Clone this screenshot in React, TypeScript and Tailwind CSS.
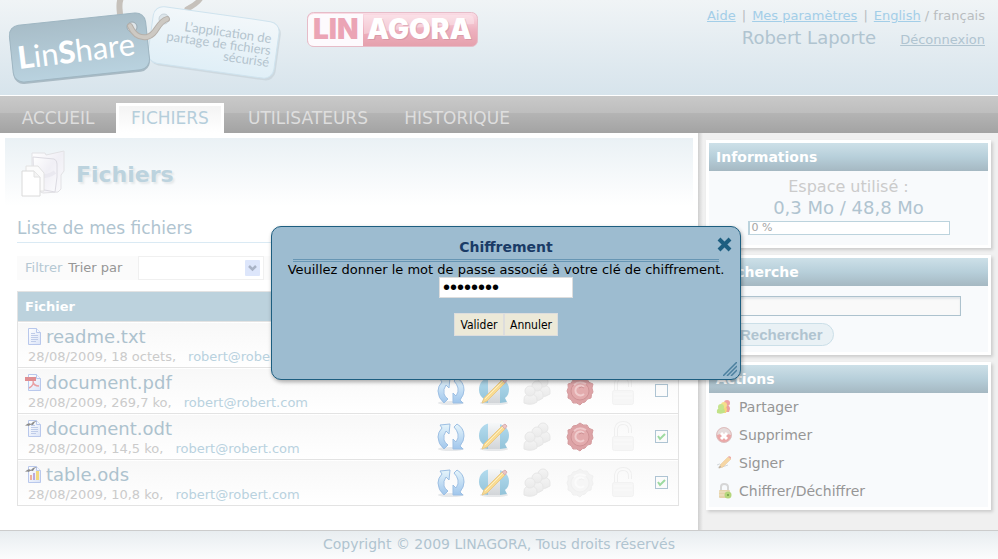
import type { ReactNode } from 'react';

function Gradients() {
  return (
    <svg width="0" height="0" className="absolute" aria-hidden="true">
      <defs>
        <linearGradient id="arrowBlue" x1="0" y1="0" x2="0" y2="1">
          <stop offset="0" stopColor="#e6f5fb" />
          <stop offset="1" stopColor="#a0c6ec" />
        </linearGradient>
        <linearGradient id="globeBlue" x1="0" y1="0" x2="0" y2="1">
          <stop offset="0" stopColor="#b4dcef" />
          <stop offset="1" stopColor="#93c3d9" />
        </linearGradient>
        <linearGradient id="paperGrey" x1="0" y1="0" x2="0" y2="1">
          <stop offset="0" stopColor="#f6f8f9" />
          <stop offset="1" stopColor="#d2d5d8" />
        </linearGradient>
        <linearGradient id="paleGrey" x1="0" y1="0" x2="0" y2="1">
          <stop offset="0" stopColor="#f4f4f4" />
          <stop offset="1" stopColor="#eaeaea" />
        </linearGradient>
        <linearGradient id="docBlue" x1="0" y1="0" x2="1" y2="1">
          <stop offset="0" stopColor="#ffffff" />
          <stop offset="1" stopColor="#dbe4f7" />
        </linearGradient>
        <linearGradient id="tagDark" x1="0" y1="0" x2="0" y2="1">
          <stop offset="0" stopColor="#a8bdc8" />
          <stop offset="1" stopColor="#b9d2df" />
        </linearGradient>
        <linearGradient id="tagLight" x1="0" y1="0" x2="0" y2="1">
          <stop offset="0" stopColor="#f2f7fa" />
          <stop offset="1" stopColor="#e0eff7" />
        </linearGradient>
        <linearGradient id="pinkPlate" x1="0" y1="0" x2="0" y2="1">
          <stop offset="0" stopColor="#fbdde6" />
          <stop offset="0.55" stopColor="#edafbd" />
          <stop offset="1" stopColor="#e5a0ac" />
        </linearGradient>
        <linearGradient id="folderGrey" x1="0" y1="0" x2="1" y2="1">
          <stop offset="0" stopColor="#ffffff" />
          <stop offset="0.5" stopColor="#f0eff5" />
          <stop offset="1" stopColor="#fbfbfd" />
        </linearGradient>
      </defs>
    </svg>
  );
}

function LinShareLogo() {
  return (
    <svg width="290" height="95" viewBox="0 0 290 95" className="shrink-0" role="img" aria-label="LinShare">
      <path d="M201 -2 C198 3 193 6 187 9" fill="none" stroke="#c6c1bb" strokeWidth="5" strokeLinecap="round" />
      <path d="M121 -2 C118 4 120 10 120 15" fill="none" stroke="#c6c1bb" strokeWidth="6" />
      <g transform="rotate(8 214 43)">
        <rect x="152" y="16" width="127" height="57" rx="10" fill="#c3ced6" opacity="0.6" />
        <rect x="150" y="14" width="127" height="57" rx="10" fill="url(#tagLight)" stroke="#cfe3ee" />
      </g>
      <g transform="rotate(-6 79 48)">
        <rect x="11" y="21" width="137" height="57" rx="10" fill="#a9bac4" />
        <rect x="11" y="19" width="137" height="57" rx="10" fill="url(#tagDark)" stroke="#9fb6c2" />
      </g>
      <circle cx="132" cy="27" r="5" fill="#dfe6ea" stroke="#9aa9b2" />
      <circle cx="164" cy="19" r="5" fill="#dde5ea" stroke="#c8d3da" />
      <path d="M130 26 C135 37 141 38 147 37 C157 35 157 22 167 19" fill="none" stroke="#b6b0aa" strokeWidth="6" strokeLinecap="round" />
      <path d="M130 26 C135 37 141 38 147 37 C157 35 157 22 167 19" fill="none" stroke="#cdc9c3" strokeWidth="4" strokeLinecap="round" />
      <g transform="rotate(-7 20 69)" fill="#ffffff" fontFamily="Lato, sans-serif" fontSize="31">
        <text x="19" y="69">
          <tspan fontWeight="900">L</tspan>in<tspan fontWeight="900">S</tspan>hare
        </text>
      </g>
      <g transform="rotate(8 270 42)" fill="#b4c4ce" fontFamily="Lato, sans-serif" fontSize="13" textAnchor="end">
        <text x="271" y="43">L’application de</text>
        <text x="272" y="55">partage de fichiers</text>
        <text x="272" y="67">sécurisé</text>
      </g>
    </svg>
  );
}

function LinagoraLogo() {
  return (
    <svg width="171" height="36" viewBox="0 0 171 36" className="shrink-0" role="img" aria-label="Linagora">
      <rect x="0.5" y="0.5" width="170" height="34" rx="6" fill="url(#pinkPlate)" stroke="#e6bcc8" />
      <path d="M7 2 H56 V34 H7 Q1 34 1 28 V8 Q1 2 7 2Z" fill="#fdfafd" />
      <path d="M57 3 H162 Q167 3 167 9 V12 Q110 14 57 22Z" fill="#fdeaf0" opacity="0.45" />
      <g fontFamily="Inter, 'Liberation Sans', sans-serif" fontWeight="900" fontSize="28">
        <text x="6" y="27" fill="#eba4b5">LIN</text>
        <text x="61" y="28" fill="#c98c9a" opacity="0.5">AGORA</text>
        <text x="60" y="27" fill="#ffffff">AGORA</text>
      </g>
    </svg>
  );
}

function FolderIcon() {
  return (
    <svg width="46" height="48" viewBox="0 0 46 48" aria-hidden="true">
      <path d="M11 3 L24 3 L25 5 L43 1 V21 L40 25 V39 L37 42 L22 43 L11 38Z" fill="url(#folderGrey)" stroke="#e2e2e5" />
      <path d="M12 7 L33 9 Q36 10 36 14 V27 L34 42 L13 38Z" fill="url(#folderGrey)" stroke="#dcdbe2" />
      <path d="M14 26 Q26 28 34 22" stroke="#eae9f0" strokeWidth="4" fill="none" />
      <path d="M5 16 H17 L23 23 V41 H5Z" fill="#fbfbfb" stroke="#e2e2e2" />
      <path d="M1 21 H13 L19 27 V46 H1Z" fill="#ffffff" stroke="#dadada" />
      <path d="M13 21 V27 H19" fill="#f4f4f4" stroke="#e2e2e2" />
    </svg>
  );
}

type FileKind = 'txt' | 'pdf' | 'odt' | 'ods';

function FileIcon({ kind }: { kind: FileKind }) {
  return (
    <svg width="17" height="17" viewBox="0 0 17 17" className="shrink-0" aria-hidden="true">
      <path d="M3.5 0.5 H11.5 L15.5 4.5 V16.5 H3.5Z" fill="url(#docBlue)" stroke="#b9c8ec" />
      <path d="M11.5 0.5 V4.5 H15.5" fill="#f4f7fd" stroke="#b9c8ec" />
      {(kind === 'txt' || kind === 'odt') && (
        <path d="M6 5.5h4M6 7.5h7M6 9.5h7M6 11.5h7M6 13.5h5" stroke="#bfcce9" />
      )}
      {kind === 'pdf' && (
        <>
          <rect x="0" y="3" width="11" height="4" fill="#e08e92" />
          <path d="M4 14 C8 12 9 9 8 7 M8 8 C9 12 12 12 14 12" stroke="#e9a0a3" strokeWidth="1.5" fill="none" />
        </>
      )}
      {(kind === 'odt' || kind === 'ods') && (
        <path d="M0 6 Q3 2 6 4 Q8 1 12 1 Q9 2 8 5 Q5 4 4 6 Q2 5 0 6Z" fill="#8b8b8b" />
      )}
      {kind === 'ods' && (
        <>
          <rect x="5" y="9" width="2" height="5" fill="#edb19d" />
          <rect x="8" y="7" width="2" height="7" fill="#bda9dc" />
          <rect x="11" y="5" width="3" height="9" fill="#f2d980" />
        </>
      )}
    </svg>
  );
}

function RefreshIcon() {
  return (
    <svg width="30" height="30" viewBox="0 0 30 30" className="mx-auto block" aria-hidden="true">
      <ellipse cx="15" cy="27" rx="13" ry="2" fill="#e6e8ea" />
      <path d="M4 3 L14 2 L13 12 L10 9 Q7 13 8 18 Q9 21 12 23 L8 27 Q2 22 2 15 Q2 10 6 6Z" fill="url(#arrowBlue)" stroke="#9dbfe3" strokeLinejoin="round" />
      <path d="M18 5 L21 2 Q28 6 28 14 Q28 19 24 24 L27 27 L17 27 L17 17 L20 20 Q23 16 22 12 Q21 8 18 5Z" fill="url(#arrowBlue)" stroke="#9dbfe3" strokeLinejoin="round" />
    </svg>
  );
}

function EditIcon() {
  return (
    <svg width="32" height="30" viewBox="0 0 32 30" className="mx-auto block" aria-hidden="true">
      <ellipse cx="16" cy="27" rx="14" ry="2" fill="#e6e8ea" />
      <path d="M15 1 C5 1 1 7 1 14 C1 18 3 21 6 23 L4 26 L10 27 H22 L29 26 L27 22 C30 20 31 17 31 13 C31 6 25 1 15 1Z" fill="url(#globeBlue)" />
      <path d="M10 1 H22 V27 H10Z" fill="url(#paperGrey)" />
      <path d="M4 27 L6 22 L24 4 L27 7 L9 25Z" fill="#f9dc93" stroke="#e8c98a" />
      <path d="M24 4 L27 2 L29 4 L27 7Z" fill="#ecc4c4" stroke="#d8b1b1" />
      <path d="M7 23 L25 5" stroke="#fdf0c4" />
    </svg>
  );
}

function GroupIcon() {
  return (
    <svg width="28" height="30" viewBox="0 0 28 30" className="mx-auto block" fill="url(#paleGrey)" stroke="#e7e7e7" aria-hidden="true">
      <path d="M15 15 Q15 9 21 9 Q27 10 27 15 V18 Q22 22 16 20Z" />
      <circle cx="20" cy="6" r="5" />
      <path d="M8 20 Q8 14 14 14 Q20 14 20 19 V22 Q16 26 10 24Z" />
      <circle cx="14" cy="10" r="5" />
      <path d="M1 24 Q1 18 7 18 Q14 18 14 24 V26 Q8 30 1 27Z" />
      <circle cx="7" cy="15" r="5" />
    </svg>
  );
}

function SealIcon({ active }: { active: boolean }) {
  return (
    <svg width="28" height="30" viewBox="0 0 28 30" className={active ? 'mx-auto block text-[#dda3a6]' : 'mx-auto block text-[#f3f3f3]'} aria-hidden="true">
      <path
        d="M14 1 Q17 4 21 3 Q22 7 27 8 Q25 12 27 16 Q25 18 25 22 Q21 22 19 26 Q16 26 14 29 Q11 26 7 27 Q6 23 2 22 Q3 18 1 15 Q3 12 2 8 Q6 8 7 4 Q11 4 14 1Z"
        fill="currentColor"
        stroke={active ? '#d49a9d' : '#f0f0f0'}
      />
      <circle cx="14" cy="15" r="9" fill={active ? '#e3abad' : '#f6f6f6'} stroke={active ? '#cf9396' : '#f0f0f0'} />
      <path d="M18 11 A5 5 0 1 0 18 18" fill="none" stroke={active ? '#f0cccd' : '#fbfbfb'} strokeWidth="2" />
      <path d="M18 12 Q16 10 13 12" fill="none" stroke={active ? '#cf9396' : '#f0f0f0'} />
      <path d="M8 9 Q13 4 20 8" fill="none" stroke={active ? '#efc8ca' : '#fafafa'} strokeWidth="2" />
    </svg>
  );
}

function LockIcon() {
  return (
    <svg width="24" height="32" viewBox="0 0 24 32" className="mx-auto block" fill="none" aria-hidden="true">
      <path d="M5 17 V8 Q6 2 12 2 Q19 2 19 9 V12" stroke="#efefef" strokeWidth="4" />
      <path d="M5 17 V8 Q6 2 12 2 Q19 2 19 9 V12" stroke="#fafafa" strokeWidth="2" />
      <rect x="1.5" y="15.5" width="21" height="14" rx="2" fill="#f6f6f6" stroke="#f2f2f2" />
      <path d="M3 19h18M3 23h18" stroke="#fafafa" />
    </svg>
  );
}

function PartagerIcon() {
  return (
    <svg width="16" height="16" viewBox="0 0 16 16" aria-hidden="true">
      <path d="M9 7 Q14 5 14 10 L13 13 H9Z" fill="#ec9f9f" />
      <circle cx="11" cy="4" r="3" fill="#efa3a3" />
      <path d="M6 8 Q11 6 11 11 L10 14 H6Z" fill="#f5d77d" />
      <circle cx="8" cy="6" r="3" fill="#f6de8b" />
      <path d="M1 14 Q0 9 5 9 Q9 9 9 13 Q6 16 1 14Z" fill="#c1e288" />
      <circle cx="5" cy="8" r="3" fill="#c5e48f" />
    </svg>
  );
}

function SupprimerIcon() {
  return (
    <svg width="16" height="16" viewBox="0 0 16 16" aria-hidden="true">
      <circle cx="8" cy="8" r="7.5" fill="#eba7a7" stroke="#dcc0c0" />
      <path d="M1 8 A7 7 0 0 1 15 8 Q8 5 1 8Z" fill="#e6dcdc" />
      <path d="M5 6 L11 12 M11 6 L5 12" stroke="#ffffff" strokeWidth="3" />
    </svg>
  );
}

function SignerIcon() {
  return (
    <svg width="16" height="16" viewBox="0 0 16 16" aria-hidden="true">
      <path d="M1 10 Q4 8 5 10 Q1 13 3 13 L12 10" stroke="#d3d7da" fill="none" />
      <path d="M3 13 L5 9 L12 2 L15 4 L7 12Z" fill="#f6d6a4" stroke="#e8c79a" strokeWidth="0.5" />
      <path d="M12 2 L13 1 L15 2 L15 4Z" fill="#eeaaa6" />
      <path d="M3 13 L4 11 L5 12Z" fill="#999999" />
    </svg>
  );
}

function ChiffrerIcon() {
  return (
    <svg width="16" height="16" viewBox="0 0 16 16" aria-hidden="true">
      <path d="M5 9 V4 Q5 1 8 1 Q12 1 12 4 V9" fill="none" stroke="#d6d6d6" strokeWidth="2" />
      <rect x="3" y="7" width="11" height="8" rx="1" fill="#e6d3ab" />
      <path d="M3 9h11M3 12h11" stroke="#f0e4c8" />
      <circle cx="12" cy="12" r="3.5" fill="#b5d67c" />
      <circle cx="12" cy="12" r="1" fill="#6f9b46" />
    </svg>
  );
}

function SideCard({ title, children }: { title: string; children: ReactNode }) {
  return (
    <section className="border-3 border-white bg-[#f8fafc] shadow-[2px_2px_3px_#cccccc]">
      <h2 className="h-7 bg-linear-to-b from-[#cde0e8] via-[#b7cfda] to-[#a5b8c2] px-[7px] text-sm leading-7 font-bold text-white">
        {title}
      </h2>
      {children}
    </section>
  );
}

const files: { name: string; kind: FileKind; info: string; signed: boolean; selected: boolean }[] = [
  { name: 'readme.txt', kind: 'txt', info: '28/08/2009, 18 octets,', signed: false, selected: false },
  { name: 'document.pdf', kind: 'pdf', info: '28/08/2009, 269,7 ko,', signed: true, selected: false },
  { name: 'document.odt', kind: 'odt', info: '28/08/2009, 14,5 ko,', signed: true, selected: true },
  { name: 'table.ods', kind: 'ods', info: '28/08/2009, 10,8 ko,', signed: false, selected: true },
];

const actions = [
  { label: 'Partager', icon: <PartagerIcon /> },
  { label: 'Supprimer', icon: <SupprimerIcon /> },
  { label: 'Signer', icon: <SignerIcon /> },
  { label: 'Chiffrer/Déchiffrer', icon: <ChiffrerIcon /> },
];

function Header() {
  return (
    <header className="flex h-24 items-start border-b border-white bg-linear-to-b from-[#f0f4f6] to-[#d7e4ec]">
      <LinShareLogo />
      <div className="ml-[17px] pt-3">
        <LinagoraLogo />
      </div>
      <div className="ml-auto pt-1.5 pr-[13px] text-right text-[13px] leading-5 whitespace-nowrap text-[#b9bdc0]">
        <p>
          <a href="#aide" className="text-[#a3cee8] underline">Aide</a>
          <span className="mx-1.5">|</span>
          <a href="#parametres" className="text-[#a3cee8] underline">Mes paramètres</a>
          <span className="mx-1.5">|</span>
          <a href="#english" className="text-[#a3cee8] underline">English</a> / français
        </p>
        <p className="text-[#b0c4d0]">
          <span className="mr-6 text-lg leading-6">Robert Laporte</span>
          <a href="#deconnexion" className="underline">Déconnexion</a>
        </p>
      </div>
    </header>
  );
}

function Nav() {
  return (
    <nav className="flex h-[37px] items-end gap-[11px] bg-[linear-gradient(#c9c9c9,#bebebe_45%,#b4b4b4_47%,#a3a3a3)] pl-[11px] text-center text-[17px] leading-[30px] text-[#dedede]">
      <a href="#accueil" className="w-[94px]">ACCUEIL</a>
      <a href="#fichiers" className="h-[30px] w-[108px] border-x-3 border-t-3 border-white bg-linear-to-b from-[#f4f4f4] to-white leading-6 text-[#b5cedb]">
        FICHIERS
      </a>
      <a href="#utilisateurs" className="w-[146px]">UTILISATEURS</a>
      <a href="#historique" className="w-[130px]">HISTORIQUE</a>
    </nav>
  );
}

function FileTable() {
  return (
    <table className="mt-[11px] w-full table-fixed border-collapse border border-[#e3e3e3]">
      <colgroup>
        <col />
        <col className="w-[43px]" />
        <col className="w-[43px]" />
        <col className="w-[43px]" />
        <col className="w-[43px]" />
        <col className="w-[43px]" />
        <col className="w-[34px]" />
      </colgroup>
      <thead>
        <tr className="h-[30px] bg-[#bcd2dd] text-[13px] text-white">
          <th colSpan={7} className="px-[7px] text-left font-bold">Fichier</th>
        </tr>
      </thead>
      <tbody>
        {files.map((file) => (
          <tr key={file.name} className="h-[46px] border-t border-[#e3e3e3] bg-linear-to-b from-[#f8f8f8] to-white">
            <td className="px-[7px] text-[13px] whitespace-nowrap">
              <div className="flex items-center gap-1">
                <FileIcon kind={file.kind} />
                <a href={`#${file.name}`} className="text-lg leading-6 text-[#adc2ce]">{file.name}</a>
              </div>
              <p className="pl-[3px] leading-4 text-[#cbcbcb]">
                {file.info}
                <a href="#robert" className="ml-3 text-[#b9d2df]">robert@robert.com</a>
              </p>
            </td>
            <td><RefreshIcon /></td>
            <td><EditIcon /></td>
            <td><GroupIcon /></td>
            <td><SealIcon active={file.signed} /></td>
            <td><LockIcon /></td>
            <td>
              <label className="mx-auto grid size-[13px]">
                <input
                  type="checkbox"
                  defaultChecked={file.selected}
                  aria-label={`Sélectionner ${file.name}`}
                  className="peer size-[13px] appearance-none border border-[#aec4d3] bg-[#fbfbfb] [grid-area:1/1]"
                />
                <svg viewBox="0 0 13 13" className="invisible size-[13px] peer-checked:visible [grid-area:1/1]" aria-hidden="true">
                  <path d="M3 6 L5 9 L10 4" fill="none" stroke="#9ddaa0" strokeWidth="2" />
                </svg>
              </label>
            </td>
          </tr>
        ))}
      </tbody>
    </table>
  );
}

function PasswordDialog() {
  return (
    <div
      role="dialog"
      aria-labelledby="dialog-title"
      className="absolute top-[226px] left-[271px] flex h-[154px] w-[470px] flex-col items-center rounded-[10px] border border-[#1d5e80] bg-[#9dbcd0] px-[21px] pt-2 text-black shadow-[1px_2px_4px_#00000055]"
    >
      <h2 id="dialog-title" className="h-[27px] w-full border-b-3 border-double border-[#6796b4] text-center text-sm leading-6 font-bold text-[#1a3b66]">
        Chiffrement
      </h2>
      <label htmlFor="key-password" className="text-[13px] leading-[15px] whitespace-nowrap">
        Veuillez donner le mot de passe associé à votre clé de chiffrement.
      </label>
      <input
        id="key-password"
        type="password"
        defaultValue="chiffres"
        className="h-[21px] w-[134px] border border-[#dddddd] bg-white px-[3px] font-['Liberation_Sans',sans-serif] text-xl leading-5"
      />
      <div className="mt-[15px] flex font-['DejaVu_Sans_Condensed','DejaVu_Sans',sans-serif] text-xs">
        <button type="button" className="h-[23px] w-[50px] border border-[#dddddd] bg-[#ece9d8]">Valider</button>
        <button type="button" className="h-[23px] w-[54px] border border-[#dddddd] bg-[#ece9d8]">Annuler</button>
      </div>
      <button type="button" aria-label="Fermer" className="absolute top-[10px] right-2">
        <svg width="15" height="15" viewBox="0 0 15 15" aria-hidden="true">
          <path d="M2 2 L13 13 M13 2 L2 13" stroke="#1d5e80" strokeWidth="4" />
        </svg>
      </button>
      <svg width="14" height="14" viewBox="0 0 14 14" className="absolute right-[3px] bottom-[3px]" aria-hidden="true">
        <path d="M0 14 L14 0 M4 14 L14 4 M8 14 L14 8" stroke="#4c809f" strokeWidth="1.5" />
      </svg>
    </div>
  );
}

export default function App() {
  return (
    <div className="relative flex min-h-screen flex-col bg-white font-['DejaVu_Sans',sans-serif]">
      <Gradients />
      <Header />
      <Nav />
      <div className="flex grow">
        <main className="min-w-0 grow px-[5px] pt-[5px]">
          <div className="bg-[linear-gradient(#eaf1f5,#ffffff_68px)] pr-[14px] pl-3 pt-3">
            <h1 className="flex h-12 items-center gap-[9px] pl-1 text-[22px] font-bold text-[#bcd3de] [text-shadow:2px_2px_2px_#e4e8ea]">
              <FolderIcon />
              Fichiers
            </h1>
            <h2 className="mt-4 border-b border-[#daeaf4] text-[17px] leading-7 text-[#b0c4d0]">Liste de mes fichiers</h2>
            <form className="mt-[13px] flex h-6 items-center bg-[#fbfbfb] pl-2 text-[13px]">
              <span className="text-[#b5c8d3]">Filtrer</span>
              <label htmlFor="sort" className="ml-1.5 text-[#969696]">Trier par</label>
              <div className="ml-4 grid">
                <select id="sort" className="h-6 w-[126px] appearance-none border border-[#f0f0f0] bg-white [grid-area:1/1]">
                  <option></option>
                  <option>Nom</option>
                  <option>Date</option>
                </select>
                <svg width="15" height="16" viewBox="0 0 15 16" className="pointer-events-none mr-1 self-center justify-self-end [grid-area:1/1]" aria-hidden="true">
                  <rect width="15" height="16" rx="1" fill="#dde6fb" />
                  <path d="M4 6 L7.5 9.5 L11 6" fill="none" stroke="#a9b3c6" strokeWidth="2.5" />
                </svg>
              </div>
            </form>
            <FileTable />
          </div>
        </main>
        <aside className="flex w-[300px] shrink-0 flex-col gap-[7px] bg-[linear-gradient(90deg,#cfcfcf,#f0f0f0_5px)] pt-[7px] pr-[7px] pb-5 pl-2">
          <SideCard title="Informations">
            <div className="flex h-[74px] flex-col items-center pt-1.5">
              <p className="leading-5 text-[#cbcbcb]">Espace utilisé :</p>
              <p className="text-lg leading-[22px] text-[#b0c4d0]">0,3 Mo / 48,8 Mo</p>
              <p className="mt-0.5 h-[14px] w-[202px] border border-l-2 border-[#bcd3dd] bg-white px-0.5 text-[11px] leading-3 text-[#a5a5a5]">0 %</p>
            </div>
          </SideCard>
          <SideCard title="Recherche">
            <form className="flex h-[66px] flex-col items-start gap-[7px] px-[7px] pt-[10px]">
              <input
                type="text"
                aria-label="Recherche"
                className="h-5 w-[245px] border border-[#adc2ce] bg-[#f9f9f9] px-1 text-[13px] shadow-[inset_0_2px_2px_#e2e6e9]"
              />
              <button type="button" className="h-[23px] rounded-full border border-[#cbdfe8] bg-[#e9f1f5] pr-[10px] pl-[23px] font-['Liberation_Sans',sans-serif] text-[15px] leading-5 font-bold text-[#b0c4d0]">
                Rechercher
              </button>
            </form>
          </SideCard>
          <SideCard title="Actions">
            <ul className="pb-0.5 text-sm text-[#969696]">
              {actions.map((action) => (
                <li key={action.label}>
                  <a href={`#${action.label}`} className="flex h-7 items-center gap-[7px] px-[7px]">
                    {action.icon}
                    {action.label}
                  </a>
                </li>
              ))}
            </ul>
          </SideCard>
        </aside>
      </div>
      <footer className="h-[29px] border-t border-[#cccccc] bg-linear-to-b from-[#e8edf0] to-[#fbfcfd] text-center text-sm leading-[27px] text-[#b0c4d0]">
        Copyright © 2009 LINAGORA, Tous droits réservés
      </footer>
      <PasswordDialog />
    </div>
  );
}
